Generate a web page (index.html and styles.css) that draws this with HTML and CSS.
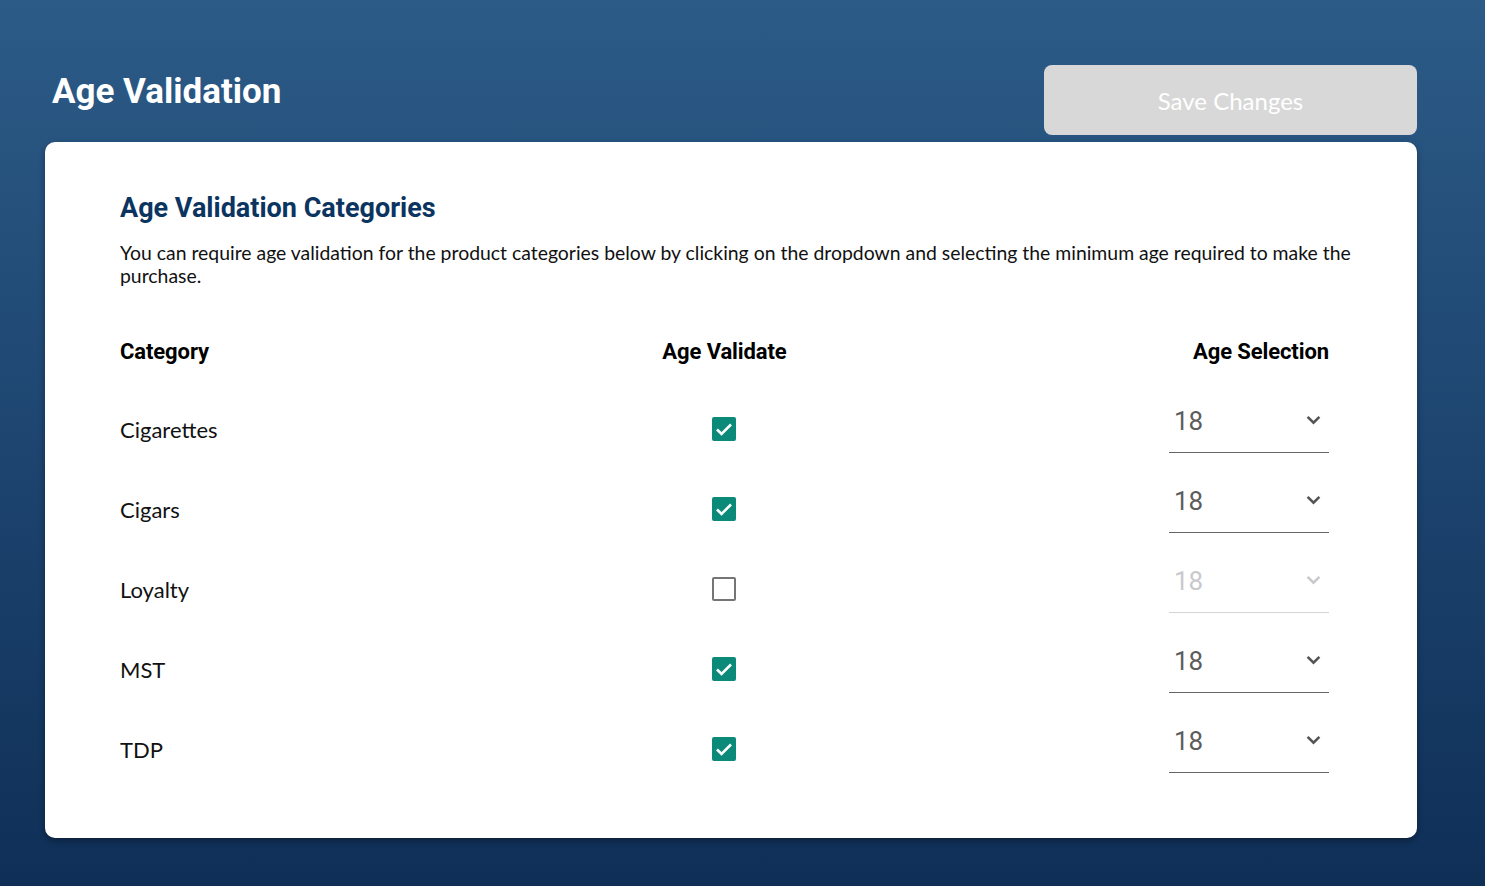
FILE: index.html
```html
<!DOCTYPE html>
<html lang="en">
<head>
<meta charset="UTF-8">
<meta name="viewport" content="width=device-width, initial-scale=1.0">
<title>Age Validation</title>
<link rel="stylesheet" href="styles.css">
</head>
<body>
<div class="page">
    <div class="top-bar">
        <h1 class="page-title">Age Validation</h1>
        <button class="save-btn" disabled>Save Changes</button>
    </div>

    <div class="card">
        <h2 class="card-title">Age Validation Categories</h2>
        <p class="card-text">You can require age validation for the product categories below by clicking on the dropdown and selecting the minimum age required to make the purchase.</p>

        <div class="table">
            <!-- Header -->
            <div class="row head">
                <div class="cell-name">Category</div>
                <div class="cell-check">Age Validate</div>
                <div class="cell-select">Age Selection</div>
            </div>

            <div class="row">
                <div class="cell-name">Cigarettes</div>
                <div class="cell-check"><span class="checkbox checked"><svg viewBox="0 0 24 24"><path d="M5 12.5l4.5 4.5 9.5-9.5"/></svg></span></div>
                <div class="cell-select"><div class="select"><span>18</span><svg class="chev" viewBox="0 0 14 9"><path d="M1.5 1.5l5.5 5.5 5.5-5.5"/></svg></div></div>
            </div>

            <div class="row">
                <div class="cell-name">Cigars</div>
                <div class="cell-check"><span class="checkbox checked"><svg viewBox="0 0 24 24"><path d="M5 12.5l4.5 4.5 9.5-9.5"/></svg></span></div>
                <div class="cell-select"><div class="select"><span>18</span><svg class="chev" viewBox="0 0 14 9"><path d="M1.5 1.5l5.5 5.5 5.5-5.5"/></svg></div></div>
            </div>

            <div class="row">
                <div class="cell-name">Loyalty</div>
                <div class="cell-check"><span class="checkbox"></span></div>
                <div class="cell-select"><div class="select disabled"><span>18</span><svg class="chev" viewBox="0 0 14 9"><path d="M1.5 1.5l5.5 5.5 5.5-5.5"/></svg></div></div>
            </div>

            <div class="row">
                <div class="cell-name">MST</div>
                <div class="cell-check"><span class="checkbox checked"><svg viewBox="0 0 24 24"><path d="M5 12.5l4.5 4.5 9.5-9.5"/></svg></span></div>
                <div class="cell-select"><div class="select"><span>18</span><svg class="chev" viewBox="0 0 14 9"><path d="M1.5 1.5l5.5 5.5 5.5-5.5"/></svg></div></div>
            </div>

            <div class="row">
                <div class="cell-name">TDP</div>
                <div class="cell-check"><span class="checkbox checked"><svg viewBox="0 0 24 24"><path d="M5 12.5l4.5 4.5 9.5-9.5"/></svg></span></div>
                <div class="cell-select"><div class="select"><span>18</span><svg class="chev" viewBox="0 0 14 9"><path d="M1.5 1.5l5.5 5.5 5.5-5.5"/></svg></div></div>
            </div>
        </div>
    </div>
</div>
</body>
</html>
```

FILE: styles.css
```css
/* Age validation settings page */
html, body {
    margin: 0;
    height: 100%;
}

body {
    background: linear-gradient(180deg, #2c5b87 0%, #1d4570 50%, #0f2f57 100%);
    font-family: "Lato", "Noto Sans", sans-serif;
}

.page {
    padding: 65px 68px 0 45px;
}

.top-bar {
    display: flex;
    justify-content: space-between;
    align-items: flex-start;
    height: 77px;
}

.page-title {
    margin: 6px 0 0 7px;
    font-family: "Roboto", sans-serif;
    font-weight: 700;
    font-size: 35px;
    line-height: 42px;
    color: #fff;
}

.save-btn {
    width: 373px;
    height: 70px;
    border: none;
    border-radius: 8px;
    background-color: #d8d8d8;
    color: #fff;
    font-family: "Lato", sans-serif;
    font-size: 24px;
    padding: 0;
}

.card {
    background-color: #fff;
    border-radius: 10px;
    box-shadow: 0 3px 6px rgba(0, 0, 0, 0.35);
    padding: 48px 56px 49px 75px;
}

.card-title {
    margin: 0;
    font-family: "Roboto", sans-serif;
    font-weight: 700;
    font-size: 27px;
    line-height: 36px;
    color: #0b3560;
}

.card-text {
    margin: 15px 0 0;
    font-size: 19.4px;
    line-height: 23px;
    color: #111;
}

.table {
    margin: 26px 32px 0 0;
}

.row {
    display: grid;
    grid-template-columns: 1fr auto 1fr;
    align-items: center;
    height: 80px;
    font-size: 22px;
    color: #111;
}

.row.head {
    height: 76px;
    font-family: "Roboto", sans-serif;
    font-weight: 700;
    font-size: 22px;
    letter-spacing: -0.1px;
    color: #000;
}

.cell-check {
    display: flex;
    justify-content: center;
}

.cell-select {
    justify-self: end;
}

.checkbox {
    width: 24px;
    height: 24px;
    margin-right: 2px;
    box-sizing: border-box;
    border: 2px solid #757575;
    border-radius: 2px;
}

.checkbox.checked {
    background-color: #0c8a79;
    border-color: #0c8a79;
}

.checkbox svg {
    display: block;
    width: 24px;
    height: 24px;
    margin: -2px;
    fill: none;
    stroke: #fff;
    stroke-width: 2.6;
}

.select {
    width: 160px;
    height: 47px;
    box-sizing: border-box;
    border-bottom: 1px solid #666;
    display: flex;
    justify-content: space-between;
    padding: 0 8px 0 5px;
    font-family: "Roboto", sans-serif;
    font-size: 26px;
    line-height: 30px;
    color: #5c5c5c;
}

.chev {
    width: 15px;
    height: 10px;
    margin-top: 9px;
    fill: none;
    stroke: #555;
    stroke-width: 2.4;
}

.select.disabled {
    color: #c9c9cd;
    border-bottom-color: #d4d4d4;
}

.select.disabled .chev {
    stroke: #c9c9cd;
}
```
